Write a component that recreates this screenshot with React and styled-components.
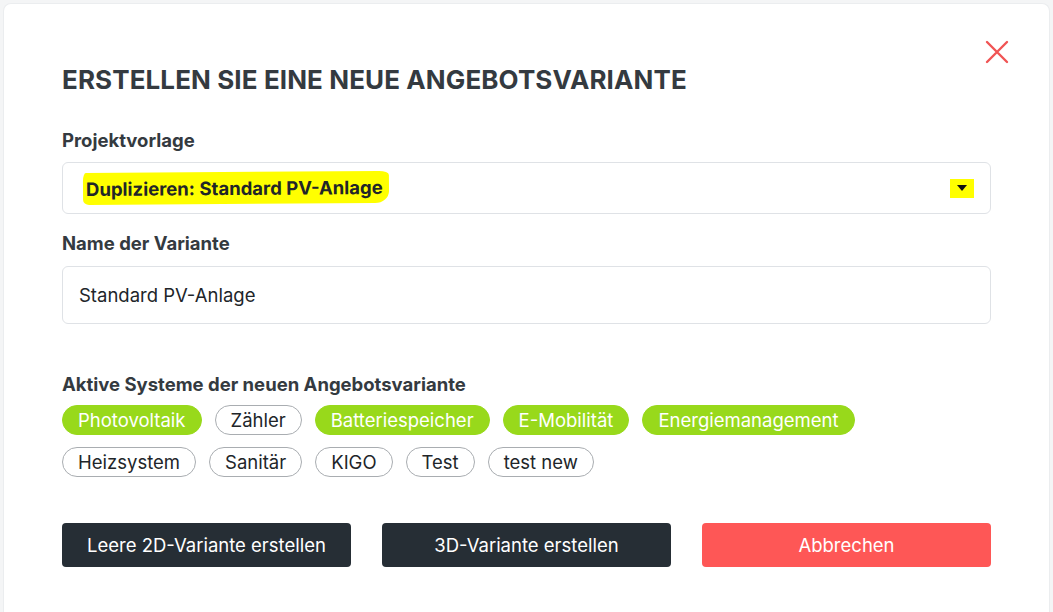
import React from "react";
import styled, { createGlobalStyle } from "styled-components";

const GlobalStyle = createGlobalStyle`
  html, body {
    margin: 0;
    padding: 0;
    background: #f4f5f6;
    font-family: "Inter", "Noto Sans", sans-serif;
  }
`;

const Page = styled.div`
  height: 612px;
  padding: 3px 3px 0 3px;
  box-sizing: border-box;
  overflow: hidden;
`;

const Modal = styled.div`
  position: relative;
  height: 100%;
  background: #fff;
  border: 1px solid #ebedef;
  border-bottom: none;
  border-radius: 8px 8px 0 0;
  padding: 60px 58px 0 58px;
  box-sizing: border-box;
`;

const CloseButton = styled.button`
  position: absolute;
  top: 36px;
  right: 40px;
  width: 24px;
  height: 24px;
  padding: 0;
  border: none;
  background: transparent;
  cursor: pointer;
`;

const Title = styled.h2`
  margin: 0 0 32px 0;
  font-size: 26px;
  font-weight: 700;
  letter-spacing: 0.1px;
  color: #343a40;
  line-height: 32px;
`;

const Label = styled.label`
  display: block;
  font-size: 18.5px;
  font-weight: 700;
  color: #343a40;
  line-height: 24px;
  margin-bottom: ${(p) => p.$gap || 10}px;
`;

const SelectBox = styled.div`
  display: flex;
  align-items: center;
  justify-content: space-between;
  height: 52px;
  border: 1px solid #dfe2e6;
  border-radius: 6px;
  padding: 0 16px 0 20px;
  box-sizing: border-box;
  margin-bottom: 17px;
`;

const Marker = styled.span`
  display: inline-block;
  background: #ffff00;
  padding: 5px 6px 5px 3px;
  border-radius: 3px 10px 14px 6px / 8px 4px 12px 5px;
  transform: rotate(-0.4deg);
  font-size: 18.5px;
  font-weight: 700;
  color: #212529;
`;

const Caret = styled.span`
  display: flex;
  align-items: center;
  justify-content: center;
  width: 24px;
  height: 19px;
  background: #ffff00;
`;

const Input = styled.div`
  height: 58px;
  display: flex;
  align-items: center;
  border: 1px solid #dfe2e6;
  border-radius: 6px;
  padding: 0 16px;
  box-sizing: border-box;
  font-size: 18.5px;
  color: #212529;
  margin-bottom: 48px;
`;

const ChipWrap = styled.div`
  display: flex;
  flex-wrap: wrap;
  gap: 12px 13px;
  max-width: 820px;
`;

const Chip = styled.span`
  display: inline-flex;
  align-items: center;
  height: 30px;
  padding: 0 15px;
  box-sizing: border-box;
  border-radius: 15px;
  font-size: 18.5px;
  color: ${(p) => (p.$active ? "#fff" : "#212529")};
  background: ${(p) => (p.$active ? "#98d91b" : "#fff")};
  border: 1px solid ${(p) => (p.$active ? "#98d91b" : "#a9adb1")};
`;

const ButtonRow = styled.div`
  display: grid;
  grid-template-columns: repeat(3, 1fr);
  gap: 31px;
  margin-top: 46px;
`;

const Button = styled.button`
  height: 44px;
  border: none;
  border-radius: 4px;
  font-family: inherit;
  font-size: 18.5px;
  color: #fff;
  background: ${(p) => (p.$danger ? "#fe5756" : "#262e35")};
  cursor: pointer;
`;

const systems = [
  { name: "Photovoltaik", active: true },
  { name: "Zähler" },
  { name: "Batteriespeicher", active: true },
  { name: "E-Mobilität", active: true },
  { name: "Energiemanagement", active: true },
  { name: "Heizsystem" },
  { name: "Sanitär" },
  { name: "KIGO" },
  { name: "Test" },
  { name: "test new" },
];

export default function App() {
  return (
    <>
      <GlobalStyle />
      <Page>
        <Modal>
          <CloseButton aria-label="close">
            <svg width="24" height="24" viewBox="0 0 24 24">
              <path
                d="M2 2 L22 22 M22 2 L2 22"
                stroke="#f05454"
                strokeWidth="2.4"
                strokeLinecap="round"
              />
            </svg>
          </CloseButton>
          <Title>ERSTELLEN SIE EINE NEUE ANGEBOTSVARIANTE</Title>

          <Label>Projektvorlage</Label>
          <SelectBox>
            <Marker>Duplizieren: Standard PV-Anlage</Marker>
            <Caret>
              <svg width="10" height="6" viewBox="0 0 10 6">
                <path d="M0 0 H10 L5 6 Z" fill="#111" />
              </svg>
            </Caret>
          </SelectBox>

          <Label $gap={11}>Name der Variante</Label>
          <Input>Standard PV-Anlage</Input>

          <Label $gap={9}>Aktive Systeme der neuen Angebotsvariante</Label>
          <ChipWrap>
            {systems.map((s) => (
              <Chip key={s.name} $active={s.active}>
                {s.name}
              </Chip>
            ))}
          </ChipWrap>

          <ButtonRow>
            <Button>Leere 2D-Variante erstellen</Button>
            <Button>3D-Variante erstellen</Button>
            <Button $danger>Abbrechen</Button>
          </ButtonRow>
        </Modal>
      </Page>
    </>
  );
}
